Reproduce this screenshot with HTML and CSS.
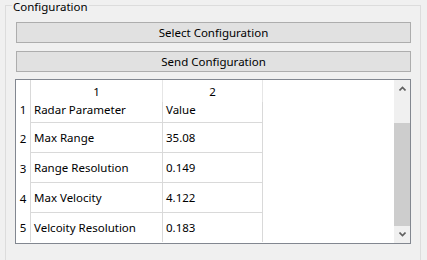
FILE: index.html
```html
<!DOCTYPE html>
<html lang="en">
<head>
  <meta charset="UTF-8" />
  <title>Configuration</title>
  <link rel="stylesheet" href="styles.css">
</head>
<body>

  <!-- Configuration group box -->
  <div class="group">
    <div class="group-title">Configuration</div>

    <button class="btn">Select Configuration</button>
    <button class="btn">Send Configuration</button>

    <!-- Parameter grid -->
    <div class="grid-view">
      <div class="grid-area">
        <table class="grid">
          <tr class="head-row">
            <th class="row-head"></th>
            <th class="col-head c1">1</th>
            <th class="col-head c2">2</th>
          </tr>
          <tr class="first-row">
            <th class="row-head">1</th>
            <td>Radar Parameter</td>
            <td>Value</td>
          </tr>
          <tr>
            <th class="row-head">2</th>
            <td>Max Range</td>
            <td>35.08</td>
          </tr>
          <tr>
            <th class="row-head">3</th>
            <td>Range Resolution</td>
            <td>0.149</td>
          </tr>
          <tr>
            <th class="row-head">4</th>
            <td>Max Velocity</td>
            <td>4.122</td>
          </tr>
          <tr class="last-row">
            <th class="row-head">5</th>
            <td>Velcoity Resolution</td>
            <td>0.183</td>
          </tr>
        </table>
      </div>

      <div class="scrollbar">
        <div class="arrow">
          <svg width="7" height="5" viewBox="0 0 7 5"><path d="M0.5 4.5 L3.5 1.5 L6.5 4.5" fill="none" stroke="#606060" stroke-width="1.6"/></svg>
        </div>
        <div class="track-gap"></div>
        <div class="thumb"></div>
        <div class="track-fill"></div>
        <div class="arrow">
          <svg width="7" height="5" viewBox="0 0 7 5"><path d="M0.5 0.5 L3.5 3.5 L6.5 0.5" fill="none" stroke="#606060" stroke-width="1.6"/></svg>
        </div>
      </div>
    </div>
  </div>

</body>
</html>
```

FILE: styles.css
```css
body {
  margin: 0;
  padding: 0;
  background: #f0f0f0;
  font-family: 'Noto Sans', 'Open Sans', sans-serif;
  font-size: 11.5px;
  color: #000;
}

.group {
  position: relative;
  margin: 5px 6px 0 5px;
  height: 246px;
  border: 1px solid #dcdcdc;
  padding: 16px 9px 0 9px;
}

.group-title {
  position: absolute;
  top: -5px;
  left: 6px;
  padding: 0 1px;
  background: #f0f0f0;
  line-height: 12px;
}

.btn {
  display: block;
  width: 395px;
  height: 21px;
  margin: 0 0 8px 1px;
  padding: 0;
  background: #e1e1e1;
  border: 1px solid #adadad;
  font-family: inherit;
  font-size: inherit;
  color: #000;
  line-height: 18px;
}

.grid-view {
  display: flex;
  height: 163px;
  margin-top: -1px;
  background: #fff;
  border: 1px solid #828790;
}

.grid-area {
  flex: 1;
}

.grid {
  border-collapse: separate;
  border-spacing: 0;
}

.grid th,
.grid td {
  padding: 0;
  font-weight: normal;
  text-align: left;
  vertical-align: middle;
  color: #000;
}

.grid td {
  height: 29px;
  padding-left: 3px;
  border-right: 1px solid #d9d9d9;
  border-bottom: 1px solid #d9d9d9;
}

.grid td:nth-child(2) {
  width: 128px;
}

.grid td:nth-child(3) {
  width: 96px;
}

.row-head {
  width: 14px;
  border-right: 1px solid #d9d9d9;
  text-align: center !important;
}

.head-row th {
  height: 22px;
}

.col-head {
  text-align: center !important;
  border-right: 1px solid #e6e6e6;
}

.first-row td {
  height: 20px;
  padding-bottom: 0;
}

.first-row td,
.first-row th {
  vertical-align: top;
  line-height: 16px;
}

.last-row td {
  border-bottom: none;
}

.scrollbar {
  width: 16px;
  display: flex;
  flex-direction: column;
  background: #f0f0f0;
}

.arrow {
  height: 17px;
  display: flex;
  align-items: center;
  justify-content: center;
}

.track-gap {
  height: 26px;
}

.thumb {
  height: 103px;
  background: #cdcdcd;
}

.track-fill {
  flex: 1;
}
```
